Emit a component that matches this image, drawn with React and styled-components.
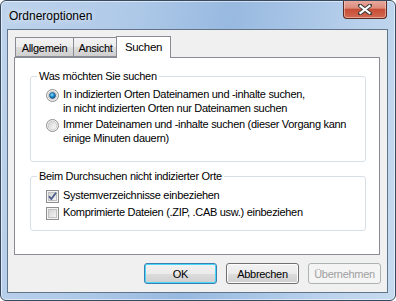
import React from "react";
import styled, { createGlobalStyle } from "styled-components";

const Global = createGlobalStyle`
  html, body { margin: 0; padding: 0; background: #ffffff; }
  body { font-family: "Liberation Sans", Arial, sans-serif; font-size: 11px; color: #000; letter-spacing: -0.3px; }
`;

const Window = styled.div`
  width: 396px;
  height: 301px;
  box-sizing: border-box;
  border: 1px solid #384a60;
  border-radius: 6px;
  box-shadow: inset 0 0 0 1px rgba(255, 255, 255, 0.55);
  background: linear-gradient(100deg, #bed3ec 0%, #aec9e8 30%, #98b9e0 52%, #a8c5e6 68%, #bcd3ed 85%, #c6daef 100%);
  display: flex;
  flex-direction: column;
  overflow: hidden;
`;

const TitleBar = styled.div`
  height: 28px;
  display: flex;
  align-items: flex-start;
  justify-content: space-between;
  padding: 0 8px 0 8px;
`;

const Title = styled.div`
  font-size: 12px;
  line-height: 12px;
  letter-spacing: 0;
  margin-top: 9px;
  color: #000;
  text-shadow: 0 0 6px rgba(255, 255, 255, 0.9);
`;

const CloseButton = styled.div`
  width: 44px;
  height: 19px;
  margin-top: -1px;
  box-sizing: border-box;
  border: 1px solid #5b2a23;
  border-top: none;
  border-radius: 0 0 4px 4px;
  background: linear-gradient(#e9aca0 0%, #dc8c7d 45%, #c84d36 52%, #d26a52 100%);
  box-shadow: inset 0 0 0 1px rgba(255, 220, 210, 0.5);
  display: flex;
  align-items: center;
  justify-content: center;
`;

const Client = styled.div`
  flex: 1;
  margin: 0 7px 7px 6px;
  border: 1px solid #62748a;
  background: #f0f0f0;
  display: flex;
  flex-direction: column;
  padding: 6px 7px 0 6px;
`;

const TabStrip = styled.div`
  display: flex;
  align-items: flex-end;
  height: 21px;
  padding-left: 1px;
  position: relative;
  z-index: 1;
`;

const Tab = styled.div`
  box-sizing: border-box;
  height: ${(p) => (p.$active ? "22px" : "20px")};
  width: ${(p) => p.$w}px;
  text-align: center;
  padding-top: 2px;
  margin-left: ${(p) => (p.$active ? "-1px" : "0")};
  margin-bottom: ${(p) => (p.$active ? "-1px" : "0")};
  border: 1px solid #898c95;
  border-bottom: ${(p) => (p.$active ? "none" : "1px solid #898c95")};
  border-right: ${(p) => (p.$last ? "1px solid #898c95" : "none")};
  background: ${(p) =>
    p.$active ? "#ffffff" : "linear-gradient(#f3f3f3 0%, #ebebeb 50%, #dddddd 51%, #cfcfcf 100%)"};
  font-size: ${(p) => (p.$active ? "11.5px" : "11px")};
  line-height: 16px;
`;

const Panel = styled.div`
  height: 198px;
  box-sizing: border-box;
  background: #ffffff;
  border: 1px solid #898c95;
  padding: 12px 13px 0 15px;
  display: flex;
  flex-direction: column;
  gap: 8px;
`;

const Group = styled.fieldset`
  margin: 0;
  border: 1px solid #d5dfe5;
  border-radius: 3px;
  padding: ${(p) => p.$top}px 10px 0 15px;
  height: ${(p) => p.$h}px;
  box-sizing: border-box;
  display: flex;
  flex-direction: column;
  gap: ${(p) => p.$gap}px;
`;

const Legend = styled.legend`
  padding: 0 2px;
  margin-left: -9px;
  font-size: 11px;
  line-height: 12px;
`;

const Option = styled.div`
  display: flex;
  align-items: flex-start;
  gap: 4px;
`;

const OptionText = styled.div`
  font-size: 11px;
  line-height: 13.5px;
  margin-top: -1px;
  white-space: nowrap;
`;

const ButtonRow = styled.div`
  display: flex;
  justify-content: flex-end;
  gap: 9px;
  margin-top: 8px;
  margin-right: -1px;
`;

const Button = styled.div`
  width: 73px;
  height: 21px;
  box-sizing: border-box;
  border-radius: 3px;
  border: 1px solid ${(p) => (p.$default ? "#3c7fb1" : p.$disabled ? "#adb2b5" : "#707070")};
  background: ${(p) =>
    p.$disabled
      ? "#f4f4f4"
      : "linear-gradient(#f2f2f2 0%, #ebebeb 50%, #dddddd 51%, #cfcfcf 100%)"};
  box-shadow: ${(p) =>
    p.$default ? "inset 0 0 0 1px #48d7fb" : p.$disabled ? "none" : "inset 0 0 0 1px #fcfcfc"};
  color: ${(p) => (p.$disabled ? "#a0a0a0" : "#000")};
  display: flex;
  align-items: center;
  justify-content: center;
  font-size: 11px;
`;

function CloseGlyph() {
  return (
    <svg width="14" height="11" viewBox="0 0 14 11">
      <path d="M2 1.5 L12 9.5 M12 1.5 L2 9.5" stroke="#3a3a3a" strokeWidth="4" strokeLinecap="square" />
      <path d="M2.5 2 L11.5 9 M11.5 2 L2.5 9" stroke="#ffffff" strokeWidth="2.2" strokeLinecap="square" />
    </svg>
  );
}

function Radio({ checked }) {
  return (
    <svg width="13" height="13" viewBox="0 0 13 13" style={{ flex: "none" }}>
      <defs>
        <linearGradient id="rg" x1="0" y1="0" x2="1" y2="1">
          <stop offset="0" stopColor="#cfcfcf" />
          <stop offset="1" stopColor="#ffffff" />
        </linearGradient>
        <radialGradient id="dot" cx="0.4" cy="0.35" r="0.7">
          <stop offset="0" stopColor="#8fe0ff" />
          <stop offset="0.5" stopColor="#1d8fd0" />
          <stop offset="1" stopColor="#0b4c85" />
        </radialGradient>
      </defs>
      <circle cx="6.5" cy="6.5" r="6" fill="#f4f4f4" stroke="#8e8f8f" />
      <circle cx="6.5" cy="6.5" r="4.3" fill="url(#rg)" stroke="#c4c4c4" strokeWidth="0.8" />
      {checked && <circle cx="6.5" cy="6.5" r="3" fill="url(#dot)" stroke="#1b4a78" strokeWidth="0.7" />}
    </svg>
  );
}

function Check({ checked }) {
  return (
    <svg width="13" height="13" viewBox="0 0 13 13" style={{ flex: "none" }}>
      <defs>
        <linearGradient id="cg" x1="0" y1="0" x2="1" y2="1">
          <stop offset="0" stopColor="#d0d0d0" />
          <stop offset="1" stopColor="#f6f6f6" />
        </linearGradient>
      </defs>
      <rect x="0.5" y="0.5" width="12" height="12" fill="#f4f4f4" stroke="#8e8f8f" />
      <rect x="2.5" y="2.5" width="8" height="8" fill="url(#cg)" stroke="#c0c0c0" />
      {checked && (
        <path d="M3 6.2 L5.3 9 L10 2.8" fill="none" stroke="#4c5d8c" strokeWidth="1.8" />
      )}
    </svg>
  );
}

export default function App() {
  return (
    <>
      <Global />
      <Window>
        <TitleBar>
          <Title>Ordneroptionen</Title>
          <CloseButton>
            <CloseGlyph />
          </CloseButton>
        </TitleBar>
        <Client>
          <TabStrip>
            <Tab $w={58}>Allgemein</Tab>
            <Tab $w={44}>Ansicht</Tab>
            <Tab $active $last $w={55}>
              Suchen
            </Tab>
          </TabStrip>
          <Panel>
            <Group $h={92} $top={7} $gap={4}>
              <Legend>Was möchten Sie suchen</Legend>
              <Option>
                <Radio checked />
                <OptionText>
                  In indizierten Orten Dateinamen und -inhalte suchen,
                  <br />
                  in nicht indizierten Orten nur Dateinamen suchen
                </OptionText>
              </Option>
              <Option>
                <Radio />
                <OptionText>
                  Immer Dateinamen und -inhalte suchen (dieser Vorgang kann
                  <br />
                  einige Minuten dauern)
                </OptionText>
              </Option>
            </Group>
            <Group $h={61} $top={8} $gap={4}>
              <Legend>Beim Durchsuchen nicht indizierter Orte</Legend>
              <Option>
                <Check checked />
                <OptionText>Systemverzeichnisse einbeziehen</OptionText>
              </Option>
              <Option>
                <Check />
                <OptionText>Komprimierte Dateien (.ZIP, .CAB usw.) einbeziehen</OptionText>
              </Option>
            </Group>
          </Panel>
          <ButtonRow>
            <Button $default>OK</Button>
            <Button>Abbrechen</Button>
            <Button $disabled>Übernehmen</Button>
          </ButtonRow>
        </Client>
      </Window>
    </>
  );
}
